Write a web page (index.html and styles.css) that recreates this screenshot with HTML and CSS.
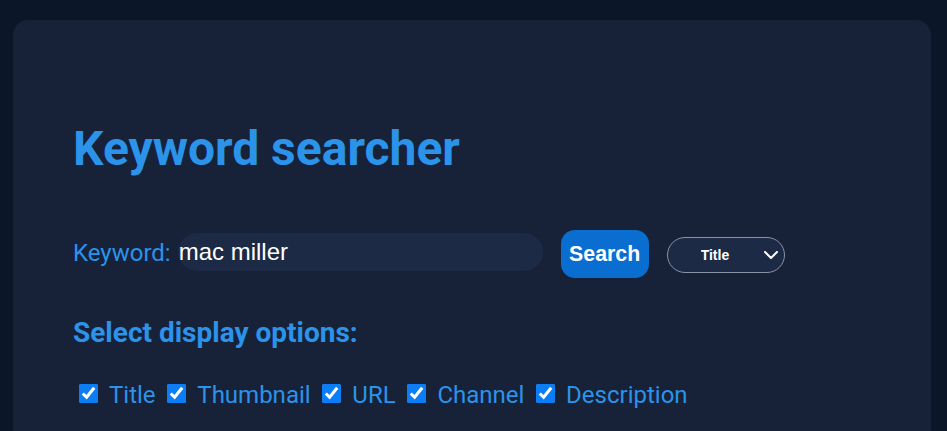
FILE: index.html
```html
<!DOCTYPE html>
<html lang="en">
<head>
<meta charset="utf-8">
<title>Keyword searcher</title>
<link rel="stylesheet" href="styles.css">
</head>
<body>
<main class="card">
  <h1 class="title">Keyword searcher</h1>
  <form class="search-row">
    <label class="kw-label" for="kw">Keyword:</label>
    <input class="kw-input" id="kw" type="text" value="mac miller">
    <button class="search-btn" type="button">Search</button>
    <div class="select-wrap">
      <select class="sort-select">
        <option>Title</option>
        <option>Channel</option>
        <option>Date</option>
      </select>
      <svg class="chev" width="14" height="8" viewBox="0 0 14 8"><path d="M1 1 L7 7 L13 1" fill="none" stroke="#fff" stroke-width="2" stroke-linecap="round" stroke-linejoin="round"/></svg>
    </div>
  </form>
  <h2 class="subtitle">Select display options:</h2>
  <div class="options">
    <label class="opt"><input type="checkbox" checked><span>Title</span></label>
    <label class="opt"><input type="checkbox" checked><span>Thumbnail</span></label>
    <label class="opt"><input type="checkbox" checked><span>URL</span></label>
    <label class="opt"><input type="checkbox" checked><span>Channel</span></label>
    <label class="opt"><input type="checkbox" checked><span>Description</span></label>
  </div>
</main>
</body>
</html>
```
FILE: styles.css
```css
html, body {
  margin: 0;
  padding: 0;
  background: #0b1628;
  height: 100%;
  overflow: hidden;
}
body {
  padding: 20px 16px 0 13px;
  box-sizing: border-box;
  font-family: Roboto, "Liberation Sans", sans-serif;
}
.card {
  background: #172239;
  border-radius: 15px 15px 0 0;
  padding: 101px 60px 0 60px;
  min-height: 100%;
  box-sizing: border-box;
}
.title {
  margin: 0;
  font-family: Roboto, sans-serif;
  font-weight: 700;
  font-size: 48px;
  line-height: 56px;
  color: #2b93ea;
}
.search-row {
  display: flex;
  align-items: center;
  margin-top: 53px;
  height: 48px;
}
.kw-label {
  font-family: Roboto, sans-serif;
  font-size: 24px;
  color: #2b93ea;
  margin-right: 7px;
  margin-bottom: 2px;
}
.kw-input {
  width: 365px;
  height: 38px;
  box-sizing: border-box;
  border: none;
  outline: none;
  border-radius: 19px;
  background: #1c2a45;
  color: #ffffff;
  font-family: "Liberation Sans", Arial, sans-serif;
  font-size: 24px;
  padding: 0 0 0 1px;
  margin-bottom: 4px;
}
.search-btn {
  margin-left: 18px;
  width: 88px;
  height: 48px;
  border: none;
  border-radius: 14px;
  background: #0a6ed1;
  color: #ffffff;
  font-family: "Liberation Sans", Arial, sans-serif;
  font-weight: 700;
  font-size: 21.33px;
  padding: 0;
}
.select-wrap {
  position: relative;
  margin-left: 18px;
  margin-top: 2px;
  height: 36px;
}
.sort-select {
  appearance: none;
  -webkit-appearance: none;
  width: 118px;
  height: 36px;
  border: 1px solid #8a93a3;
  border-radius: 18px;
  background: #1c2a45;
  color: #ffffff;
  font-family: "Liberation Sans", Arial, sans-serif;
  font-weight: 700;
  font-size: 14px;
  padding: 0 0 0 33px;
  outline: none;
}
.chev {
  position: absolute;
  right: 7px;
  top: 14px;
  pointer-events: none;
}
.subtitle {
  margin: 38px 0 0 0;
  font-family: Roboto, sans-serif;
  font-weight: 700;
  font-size: 28px;
  line-height: 34px;
  color: #2b93ea;
}
.options {
  display: flex;
  align-items: center;
  margin-top: 31px;
}
.opt {
  display: flex;
  align-items: center;
  font-family: Roboto, sans-serif;
  font-size: 24px;
  color: #2b93ea;
  margin-right: 5.75px;
}
.opt input {
  width: 19px;
  height: 19px;
  margin: 0 11px 4px 6px;
  accent-color: #0b7df6;
}
```
